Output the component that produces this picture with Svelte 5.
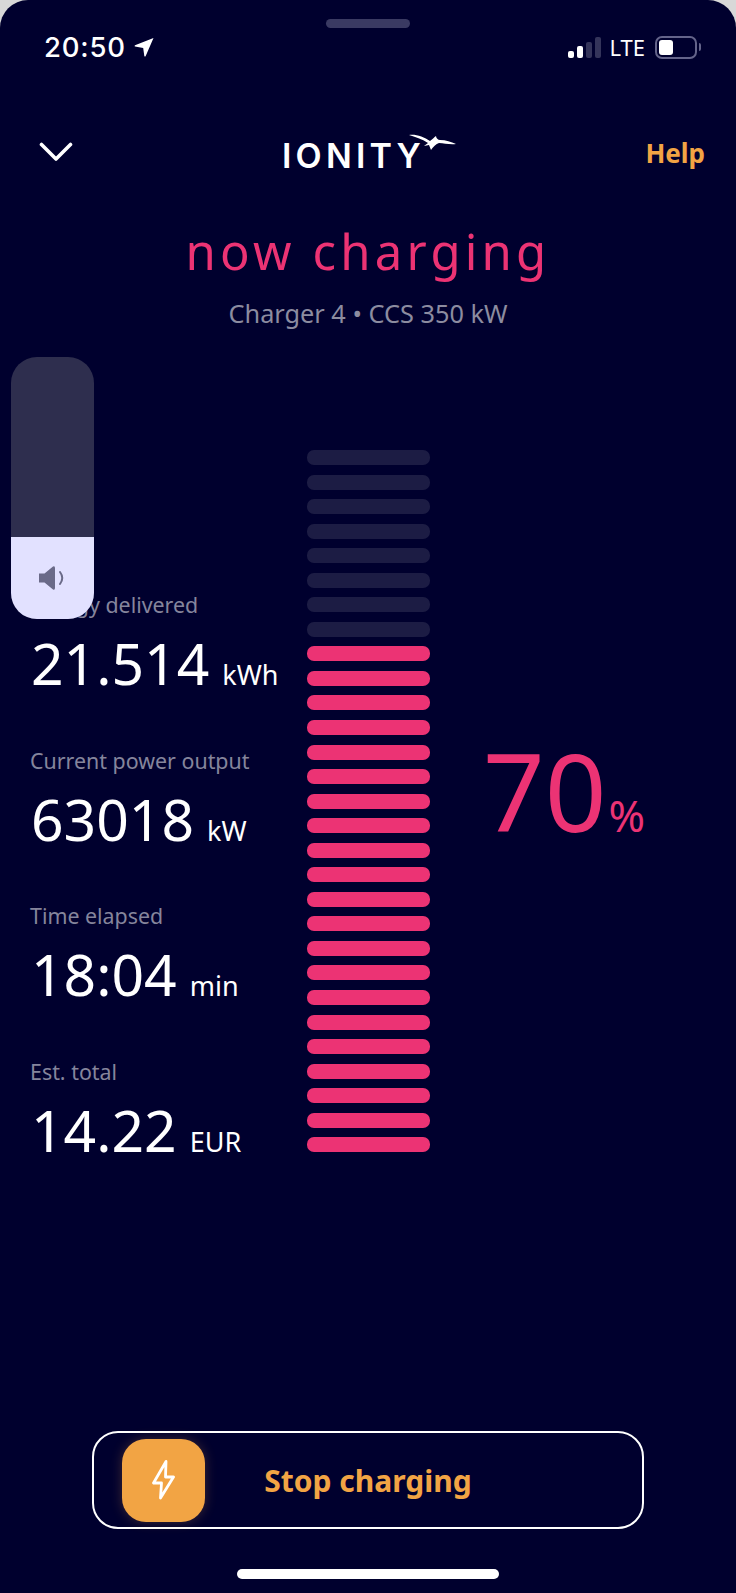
<script>
  const total = 29;
  const dimCount = 8;
  const bars = Array.from({ length: total }, (_, i) => i < dimCount);
  const stats = [
    { label: 'Energy delivered', value: '21.514', unit: 'kWh' },
    { label: 'Current power output', value: '63018', unit: 'kW' },
    { label: 'Time elapsed', value: '18:04', unit: 'min' },
    { label: 'Est. total', value: '14.22', unit: 'EUR' }
  ];
</script>

<div class="screen">
  <div class="handle"></div>

  <div class="status">
    <div class="clock">
      <span>20:50</span>
      <svg class="loc" width="20" height="20" viewBox="0 0 20 20"><path d="M19.5 1 L11.6 19.2 Q10.8 20 10.3 19 L9.2 11 L1 9.6 Q0 9 1 8.2 Z" fill="#fff"/></svg>
    </div>
    <div class="sys">
      <div class="signal">
        <i class="s1"></i><i class="s2"></i><i class="s3"></i><i class="s4"></i>
      </div>
      <span class="lte">LTE</span>
      <div class="battery"><b></b></div>
      <div class="nub"></div>
    </div>
  </div>

  <header class="nav">
    <svg class="chev" width="34" height="20" viewBox="0 0 34 20"><path d="M2.5 2.5 L17 17 L31.5 2.5" fill="none" stroke="#fff" stroke-width="3.6" stroke-linecap="round" stroke-linejoin="round"/></svg>
    <div class="logo">
      <span class="word">IONITY</span>
      <svg class="bird" width="48" height="18" viewBox="0 0 48 18"><path d="M1 1 C8 0 16 3 22 7 C25 5 26 3 28 2 C28 4 30 6 32 6 C38 6 43 8 48 10 C42 11 36 9 31 9 C28 10 25 13 23 16 L21 11 L16 12 L20 9 C14 5 7 3 1 1 Z" fill="#fff"/></svg>
    </div>
    <span class="help">Help</span>
  </header>

  <h1 class="title">now charging</h1>
  <p class="sub">Charger 4 • CCS 350 kW</p>

  <main class="main">
    <section class="stats">
      {#each stats as s}
        <div class="stat">
          <div class="label">{s.label}</div>
          <div class="value"><span class="num">{s.value}</span><span class="unit">{s.unit}</span></div>
        </div>
      {/each}
    </section>
    <div class="bars">
      {#each bars as dim}
        <div class="bar" class:dim></div>
      {/each}
    </div>
    <div class="pct"><span class="big">70</span><span class="sign">%</span></div>
  </main>

  <div class="volume">
    <div class="vol-fill">
      <svg width="30" height="26" viewBox="0 0 30 26"><path d="M1 8.5 H6.5 L15 1.5 Q17 0.5 17 3 V23 Q17 25.5 15 24.5 L6.5 17.5 H1 Z" fill="#6a6a88"/><path d="M22 7 Q26.5 13 22 19" fill="none" stroke="#6a6a88" stroke-width="2" stroke-linecap="round"/></svg>
    </div>
  </div>

  <button class="stop">
    <span class="knob">
      <svg width="24" height="40" viewBox="0 0 24 40"><path d="M14 1.5 L1.5 23 H9.5 L8.5 38 L21.5 17 H13.5 Z" fill="none" stroke="#fff" stroke-width="2.8" stroke-linejoin="round"/></svg>
    </span>
    <span class="stop-text">Stop charging</span>
    <span></span>
  </button>

  <div class="home"></div>
</div>

<style>
  :global(body) {
    margin: 0;
    background: #d8d8d8;
  }
  .screen {
    position: relative;
    width: 736px;
    height: 1593px;
    background: #00002e;
    border-radius: 28px 28px 0 0;
    overflow: hidden;
    font-family: "Noto Sans", sans-serif;
    color: #fff;
    display: flex;
    flex-direction: column;
  }
  .handle {
    width: 84px;
    height: 9px;
    margin: 19px auto 0;
    border-radius: 5px;
    background: #3a3a62;
  }
  .status {
    display: flex;
    justify-content: space-between;
    align-items: center;
    height: 26px;
    margin-top: 6px;
    padding: 0 35px 0 44px;
  }
  .clock {
    display: flex;
    align-items: center;
    gap: 8px;
    font-family: Inter, sans-serif;
    font-size: 27.5px;
    font-weight: 500;
    line-height: 26px;
    letter-spacing: 0.8px;
  }
  .sys {
    display: flex;
    align-items: center;
  }
  .signal {
    display: flex;
    align-items: flex-end;
    gap: 3px;
    height: 22px;
  }
  .signal i {
    display: block;
    width: 6px;
    border-radius: 2px;
    background: #fff;
  }
  .s1 { height: 7px; }
  .s2 { height: 12px; }
  .signal .s3 { height: 16px; background: #34345a; }
  .signal .s4 { height: 21px; background: #34345a; }
  .lte {
    margin-left: 8px;
    font-size: 22px;
    line-height: 26px;
  }
  .battery {
    box-sizing: border-box;
    width: 42px;
    height: 23px;
    margin-left: 10px;
    padding: 2px;
    border: 2px solid #64648a;
    border-radius: 7px;
  }
  .battery b {
    display: block;
    width: 14px;
    height: 15px;
    border-radius: 3px;
    background: #fff;
  }
  .nub {
    width: 2px;
    height: 8px;
    margin-left: 2px;
    border-radius: 0 2px 2px 0;
    background: #64648a;
  }
  .nav {
    display: grid;
    grid-template-columns: 1fr auto 1fr;
    align-items: center;
    height: 50px;
    margin-top: 68px;
    padding: 0 31px;
  }
  .chev { margin: -3px 0 0 8px; }
  .logo {
    display: flex;
    align-items: flex-start;
    height: 38px;
  }
  .word {
    font-family: Inter, sans-serif;
    font-weight: 600;
    font-size: 34px;
    line-height: 38px;
    letter-spacing: 4.2px;
    margin-top: 3px;
    padding-left: 2px;
  }
  .bird { margin-left: -17px; }
  .help {
    justify-self: end;
    font-size: 26px;
    font-weight: 700;
    color: #f2a444;
  }
  .title {
    margin: 37px 0 0;
    text-align: center;
    font-size: 49px;
    font-weight: 400;
    line-height: 72px;
    letter-spacing: 4.2px;
    color: #ec3374;
  }
  .sub {
    margin: 8px 0 0;
    text-align: center;
    font-size: 25.3px;
    line-height: 36px;
    color: #8c8ca0;
  }
  .main {
    display: flex;
    align-items: flex-start;
    margin-top: 119px;
    height: 703px;
  }
  .stats {
    width: 277px;
    margin-left: 30px;
    padding-top: 139px;
  }
  .stat {
    height: 155.5px;
  }
  .label {
    font-size: 21.4px;
    line-height: 32px;
    color: #85859c;
  }
  .value {
    display: flex;
    align-items: baseline;
    margin-top: 4px;
    padding-left: 1px;
    line-height: 76px;
  }
  .num {
    font-size: 57px;
    font-weight: 400;
  }
  .unit {
    margin-left: 13px;
    font-size: 27px;
    font-weight: 400;
  }
  .bars {
    width: 123px;
    display: flex;
    flex-direction: column;
    gap: 9.55px;
  }
  .bar {
    height: 15px;
    border-radius: 7px;
    background: #ec3374;
  }
  .bar.dim {
    background: #1c1c44;
  }
  .pct {
    display: flex;
    align-items: baseline;
    margin-left: 53px;
    padding-top: 271px;
    color: #ec3374;
  }
  .big {
    font-size: 108px;
    font-weight: 400;
    line-height: 140px;
  }
  .sign {
    margin-left: 2px;
    font-size: 44px;
    font-weight: 400;
  }
  .volume {
    position: absolute;
    left: 11px;
    top: 357px;
    width: 83px;
    height: 262px;
    border-radius: 26px;
    overflow: hidden;
    background: #2e2e4e;
    display: flex;
    align-items: flex-end;
  }
  .vol-fill {
    width: 100%;
    height: 82px;
    background: #e2e1ff;
    display: flex;
    align-items: center;
    justify-content: center;
    padding-left: 1px;
    box-sizing: border-box;
  }
  .stop {
    position: absolute;
    left: 92px;
    top: 1431px;
    box-sizing: border-box;
    width: 552px;
    height: 98px;
    padding: 0 0 0 28px;
    border: 2px solid #fff;
    border-radius: 26px;
    background: transparent;
    display: grid;
    grid-template-columns: 1fr auto 1fr;
    align-items: center;
    font-family: inherit;
  }
  .knob {
    width: 83px;
    height: 83px;
    border-radius: 24px;
    background: #f2a444;
    box-shadow: 0 0 12px rgba(242, 164, 68, 0.25);
    display: flex;
    align-items: center;
    justify-content: center;
  }
  .stop-text {
    font-size: 30px;
    font-weight: 700;
    color: #f2a444;
    margin-left: -28px;
  }
  .home {
    position: absolute;
    left: 237px;
    top: 1569px;
    width: 262px;
    height: 10px;
    border-radius: 5px;
    background: #fff;
  }
</style>
